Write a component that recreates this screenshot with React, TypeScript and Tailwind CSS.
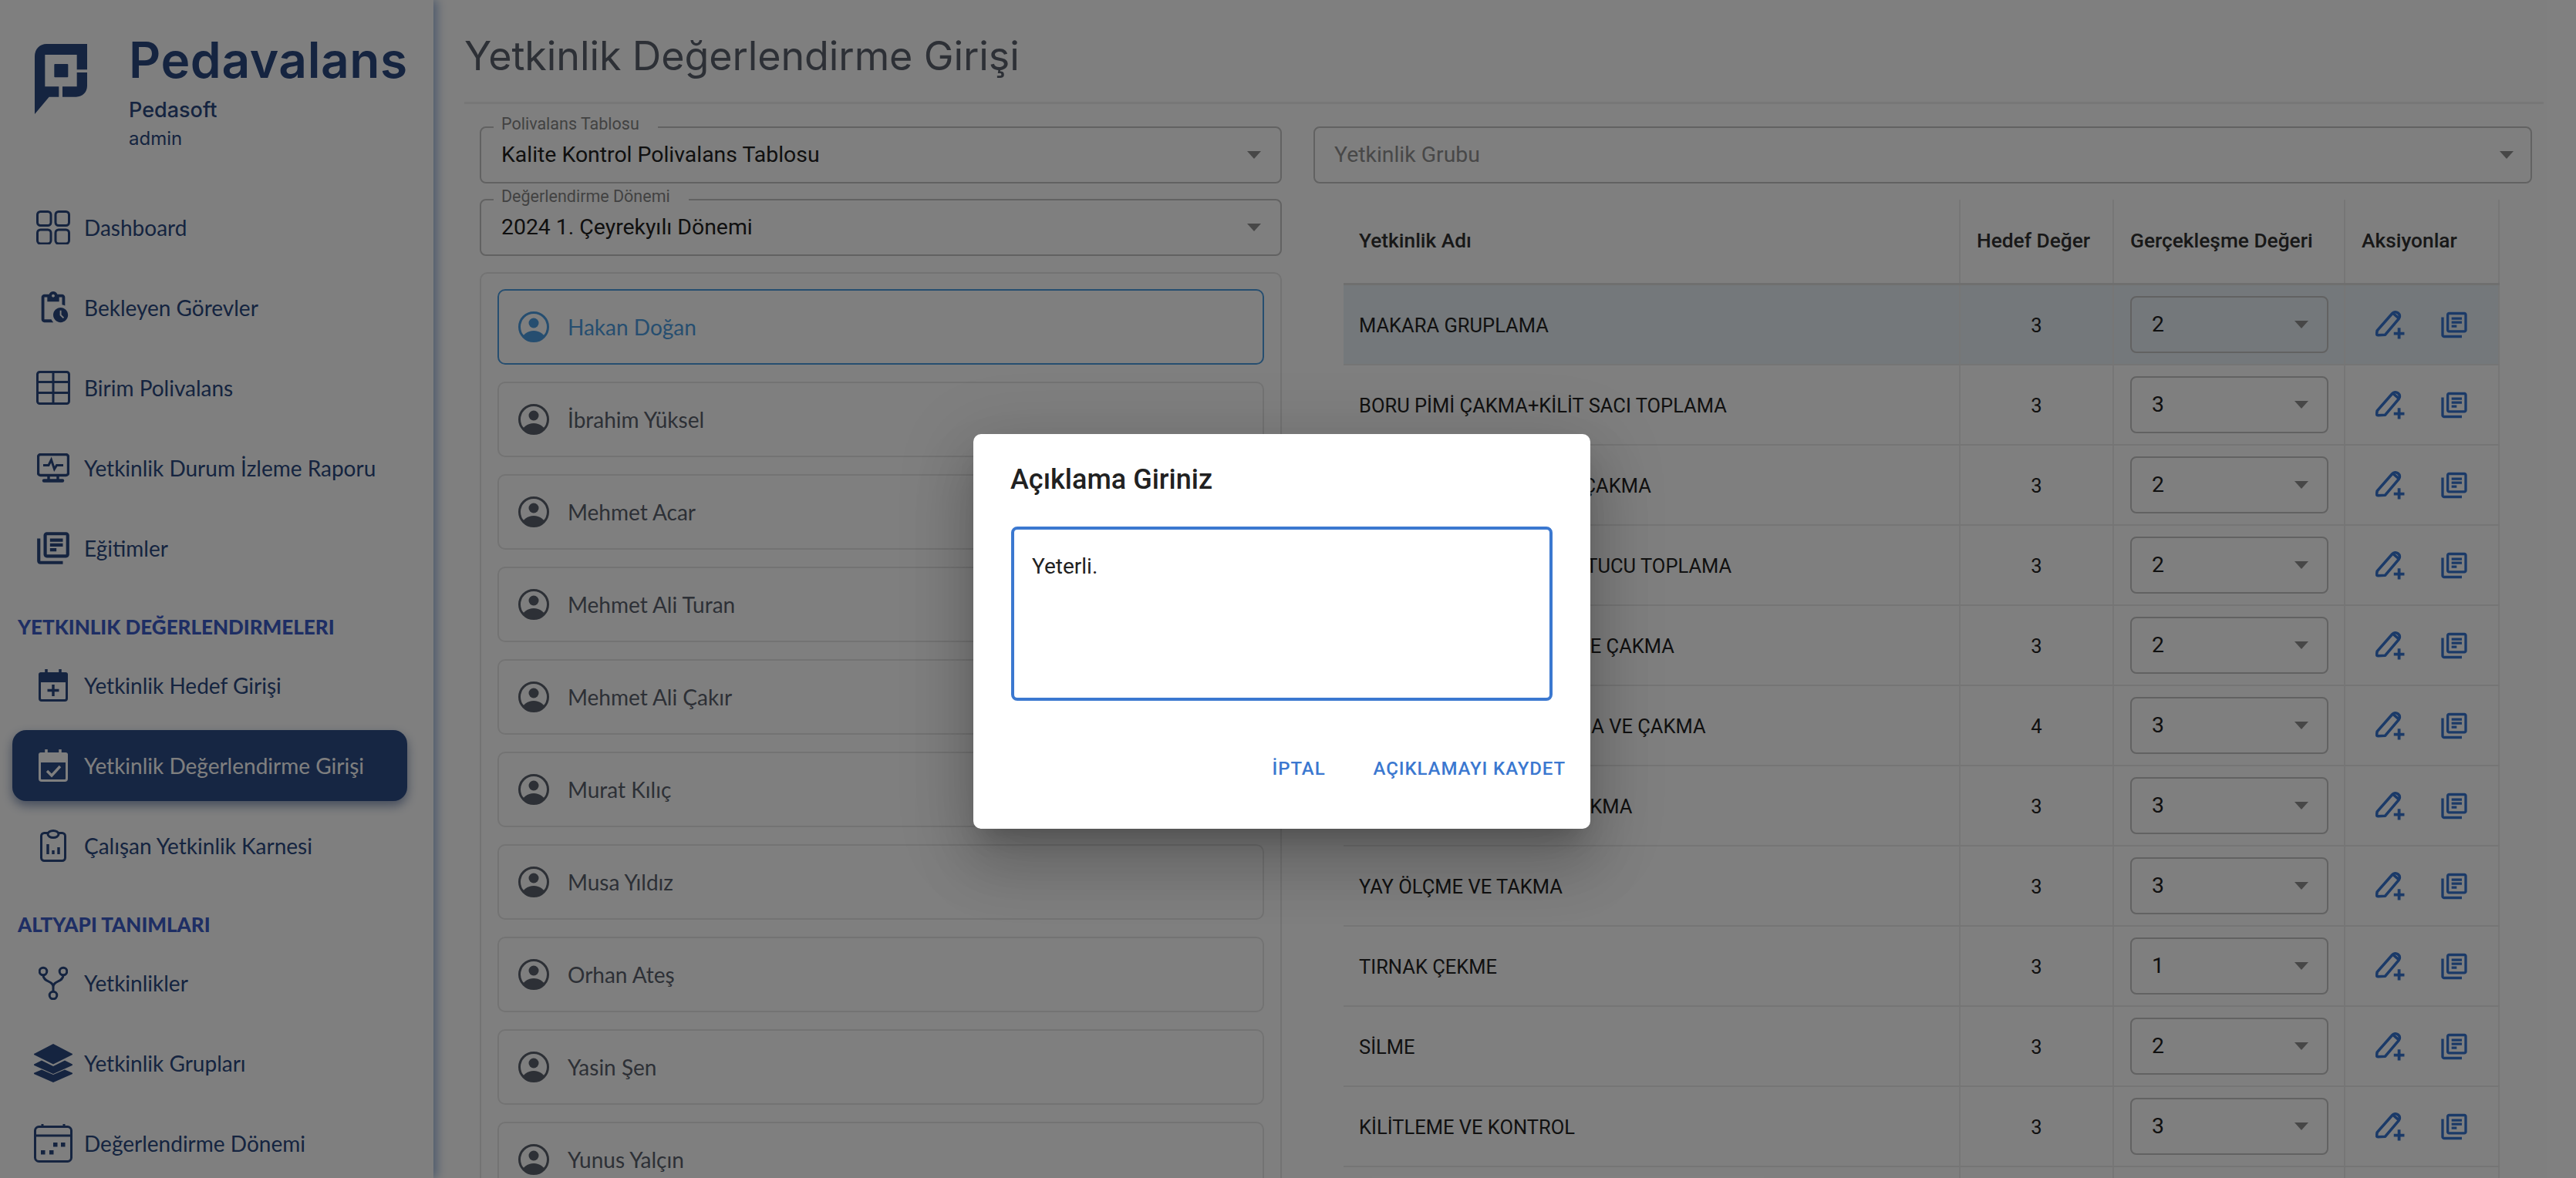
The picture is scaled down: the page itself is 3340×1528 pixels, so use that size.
import type { ReactNode } from "react";
import { MdOutlineLibraryBooks, MdOutlinePendingActions } from "react-icons/md";

const roboto = "font-['Roboto',sans-serif]";
const lato = "font-['Lato',sans-serif]";
const inter = "font-['Inter',sans-serif]";

const DashboardIcon = () => (
  <svg viewBox="0 0 44 44" className="w-[44px] h-[44px]" fill="none" stroke="currentColor" strokeWidth="3">
    <rect x="1.5" y="1.5" width="17.5" height="18" rx="4" />
    <rect x="25" y="1.5" width="17.5" height="18" rx="4" />
    <rect x="1.5" y="25" width="17.5" height="18" rx="4" />
    <rect x="25" y="25" width="17.5" height="18" rx="4" />
  </svg>
);

const TableIcon = () => (
  <svg viewBox="0 0 44 44" className="w-[44px] h-[44px]" fill="none" stroke="currentColor" strokeWidth="3">
    <rect x="1.5" y="1.5" width="41" height="41" rx="3" />
    <path d="M1.5 14.5h41M1.5 28.5h41M22 1.5v41" />
  </svg>
);

const MonitorIcon = () => (
  <svg viewBox="0 0 42 38" className="w-[42px] h-[38px]" fill="none" stroke="currentColor">
    <rect x="1.5" y="1.5" width="39" height="27" rx="3" strokeWidth="3.4" />
    <path d="M8 15.500h7l3.500-7 4 12 3-5h8.500" strokeWidth="3" />
    <path d="M15 29v6M27 29v6" strokeWidth="3.4" />
    <path d="M9 35.500h24" strokeWidth="4.400" strokeLinecap="round" />
  </svg>
);

const CalendarPlusIcon = () => (
  <svg viewBox="0 0 38 42" className="w-[38px] h-[42px]" fill="none">
    <path d="M3 4h32a3 3 0 0 1 3 3v10H0V7a3 3 0 0 1 3-3z" fill="currentColor" />
    <path d="M10 0v6M28 0v6" stroke="currentColor" strokeWidth="3.5" />
    <rect x="1.5" y="6" width="35" height="34.5" rx="2.5" stroke="currentColor" strokeWidth="3" />
    <path d="M19 20v15M11.5 27.5h15" stroke="currentColor" strokeWidth="3.4" />
  </svg>
);

const CalendarCheckIcon = () => (
  <svg viewBox="0 0 38 42" className="w-[38px] h-[42px]" fill="none">
    <path d="M3 4h32a3 3 0 0 1 3 3v10H0V7a3 3 0 0 1 3-3z" fill="currentColor" />
    <path d="M10 0v6M28 0v6" stroke="currentColor" strokeWidth="3.5" />
    <rect x="1.5" y="6" width="35" height="34.5" rx="2.5" stroke="currentColor" strokeWidth="3" />
    <path d="M11 28l6 6 11-12" stroke="currentColor" strokeWidth="3.4" />
  </svg>
);

const ReportIcon = () => (
  <svg viewBox="0 0 34 42" className="w-[34px] h-[42px]" fill="none" stroke="currentColor">
    <rect x="1.5" y="4.5" width="31" height="36" rx="4" strokeWidth="3" />
    <ellipse cx="17" cy="6" rx="7" ry="4.5" strokeWidth="3" fill="#fff" />
    <path d="M10 19v13M17 27v5M24 23v9" strokeWidth="3.4" />
  </svg>
);

const ForkIcon = () => (
  <svg viewBox="0 0 38 44" className="w-[38px] h-[44px]" fill="none" stroke="currentColor" strokeWidth="3">
    <circle cx="6" cy="7" r="4.8" />
    <circle cx="32" cy="7" r="4.8" />
    <circle cx="19" cy="38" r="4.8" />
    <path d="M6 12c0 9 13 7 13 15v6M32 12c0 9-13 7-13 15" />
  </svg>
);

const LayersIcon = () => (
  <svg viewBox="0 0 50 50" className="w-[50px] h-[50px]" fill="currentColor">
    <path d="M25 0l24 12.5a1 1 0 0 1 0 2L25 26.5 1 14.5a1 1 0 0 1 0-2z" />
    <path d="M10 21.5l15 7.5 15-7.5 9.5 4.8a1 1 0 0 1 0 1.8L25 39 .5 28.1a1 1 0 0 1 0-1.8z" />
    <path d="M10 33.5l15 6.5 15-6.5 9.5 4a1 1 0 0 1 0 1.8L25 50 .5 39.3a1 1 0 0 1 0-1.8z" />
  </svg>
);

const CalendarDotsIcon = () => (
  <svg viewBox="0 0 50 50" className="w-[50px] h-[50px]" fill="none">
    <rect x="1.5" y="3.5" width="47" height="45" rx="5" stroke="currentColor" strokeWidth="3" />
    <path d="M1.5 15h47M11 0v4M39 0v4" stroke="currentColor" strokeWidth="3" />
    <path d="M9 34h5.5v5.5H9zM20 34h5.5v5.5H20zM25 24h5.5v5.5H25zM35 24h5.5v5.5H35z" fill="currentColor" />
  </svg>
);

const Logo = () => (
  <svg viewBox="44 22 204 273" className="w-[68px] h-[91px] shrink-0 text-[#2a4880]" fill="currentColor">
    <path d="M44 295V70c0-28 20-48 46-48h158v100h-40V64H84v124h54v40h-38z" />
    <path d="M208 133h40v52c0 25-18 43-43 43h-53v-40h56z" />
    <rect x="120" y="100" width="54" height="52" rx="3" />
  </svg>
);

const PenPlusIcon = () => (
  <svg viewBox="0 0 36 36" className="w-[38px] h-[38px]" fill="none" stroke="currentColor" strokeWidth="3.4">
    <path d="M2 25.500L20.500 4.500c2-2.200 5-2.400 7.200-.7 2.200 1.700 2.700 4.700 1 6.900L12 30.500l-9 .5c-1 0-1.500-.5-1.500-1.500z" strokeLinejoin="round" />
    <path d="M22 4.500l7 6" />
    <path d="M29 22v13.500M22.500 29h13" strokeWidth="3.600" />
  </svg>
);

const AvatarIcon = ({ clipId }: { clipId: string }) => (
  <svg viewBox="0 0 40 40" className="w-[40px] h-[40px] shrink-0" fill="currentColor">
    <defs>
      <clipPath id={clipId}>
        <circle cx="20" cy="20" r="18" />
      </clipPath>
    </defs>
    <circle cx="20" cy="20" r="18.500" fill="none" stroke="currentColor" strokeWidth="3" />
    <circle cx="20" cy="15" r="6.500" />
    <ellipse cx="20" cy="37" rx="15" ry="12" clipPath={`url(#${clipId})`} />
  </svg>
);

const Arrow = () => (
  <svg viewBox="0 0 18 10" className="w-[18px] h-[10px] shrink-0" fill="#8f8f8f">
    <path d="M0 0h18L9 10z" />
  </svg>
);

type NavRow = { label: string; icon: ReactNode; active?: boolean };

const topNav: NavRow[] = [
  { label: "Dashboard", icon: <DashboardIcon /> },
  { label: "Bekleyen Görevler", icon: <MdOutlinePendingActions className="w-[46px] h-[46px]" /> },
  { label: "Birim Polivalans", icon: <TableIcon /> },
  { label: "Yetkinlik Durum İzleme Raporu", icon: <MonitorIcon /> },
  { label: "Eğitimler", icon: <MdOutlineLibraryBooks className="w-[50px] h-[50px]" /> },
];

const evalNav: NavRow[] = [
  { label: "Yetkinlik Hedef Girişi", icon: <CalendarPlusIcon /> },
  { label: "Yetkinlik Değerlendirme Girişi", icon: <CalendarCheckIcon />, active: true },
  { label: "Çalışan Yetkinlik Karnesi", icon: <ReportIcon /> },
];

const infraNav: NavRow[] = [
  { label: "Yetkinlikler", icon: <ForkIcon /> },
  { label: "Yetkinlik Grupları", icon: <LayersIcon /> },
  { label: "Değerlendirme Dönemi", icon: <CalendarDotsIcon /> },
];

const people = [
  "Hakan Doğan",
  "İbrahim Yüksel",
  "Mehmet Acar",
  "Mehmet Ali Turan",
  "Mehmet Ali Çakır",
  "Murat Kılıç",
  "Musa Yıldız",
  "Orhan Ateş",
  "Yasin Şen",
  "Yunus Yalçın",
];

const rows = [
  { name: "MAKARA GRUPLAMA", target: 3, value: 2 },
  { name: "BORU PİMİ ÇAKMA+KİLİT SACI TOPLAMA", target: 3, value: 3 },
  { name: "KİLİT SACI VE PİMLERİNİ ÇAKMA", target: 3, value: 2 },
  { name: "MAKARA VE KİLİT YAY TUTUCU TOPLAMA", target: 3, value: 2 },
  { name: "MAKARA MİLİNİ TAKMA VE ÇAKMA", target: 3, value: 2 },
  { name: "GÖVDE PİMLERİ HİZALAMA VE ÇAKMA", target: 4, value: 3 },
  { name: "KİLİT MİLİ VE KOL YAYI TAKMA", target: 3, value: 3 },
  { name: "YAY ÖLÇME VE TAKMA", target: 3, value: 3 },
  { name: "TIRNAK ÇEKME", target: 3, value: 1 },
  { name: "SİLME", target: 3, value: 2 },
  { name: "KİLİTLEME VE KONTROL", target: 3, value: 3 },
];

function NavItem({ row }: { row: NavRow }) {
  return (
    <div className="h-[104px] flex items-center">
      <div
        className={
          row.active
            ? "mx-[16px] w-[512px] h-[92px] rounded-[18px] bg-[#2c4c86] text-white flex items-center pl-[28px] shadow-[0_6px_14px_rgba(40,70,125,0.55)]"
            : "flex items-center pl-[44px] text-[#2a4880]"
        }
      >
        <span className="w-[50px] flex justify-center shrink-0">{row.icon}</span>
        <span className={`${lato} ml-[15px] text-[28px] whitespace-nowrap`}>{row.label}</span>
      </div>
    </div>
  );
}

function SectionTitle({ children }: { children: ReactNode }) {
  return (
    <div className={`${lato} h-[48px] mt-[26px] pl-[23px] flex items-center text-[26px] font-black text-[#3c5cc8] whitespace-nowrap`}>
      {children}
    </div>
  );
}

function Sidebar() {
  return (
    <aside className="relative z-10 w-[562px] h-full shrink-0 bg-white shadow-[5px_0_12px_rgba(80,125,190,0.55)]">
      <div className="h-[243px] pl-[45px] pt-[57px] flex items-start">
        <Logo />
        <div className="ml-[54px] -mt-[1px] text-[#2a4880]">
          <div className={`${inter} text-[64px] leading-[44px] h-[44px] font-semibold tracking-[0.6px] whitespace-nowrap`}>Pedavalans</div>
          <div className={`${inter} mt-[28px] text-[27px] leading-[30px] font-medium`}>Pedasoft</div>
          <div className={`${inter} mt-[8px] text-[24px] leading-[28px]`}>admin</div>
        </div>
      </div>
      {topNav.map((r) => (
        <NavItem key={r.label} row={r} />
      ))}
      <SectionTitle>YETKINLIK DEĞERLENDIRMELERI</SectionTitle>
      {evalNav.map((r) => (
        <NavItem key={r.label} row={r} />
      ))}
      <SectionTitle>ALTYAPI TANIMLARI</SectionTitle>
      {infraNav.map((r) => (
        <NavItem key={r.label} row={r} />
      ))}
    </aside>
  );
}

function SelectBox({ label, value, placeholder, inset }: { label?: string; value?: string; placeholder?: string; inset: string }) {
  return (
    <div className={`relative h-[74px] rounded-[8px] border-2 border-[#c4c4c4] flex items-center justify-between ${inset}`}>
      {label && (
        <span className={`${roboto} absolute left-[16px] -top-[17px] bg-white pl-[10px] pr-[24px] text-[21.5px] leading-[24px] text-[#858585] whitespace-nowrap`}>
          {label}
        </span>
      )}
      {value && <span className={`${roboto} text-[28.4px] text-[#212121]`}>{value}</span>}
      {placeholder && <span className={`${roboto} text-[28.4px] text-[#909090]`}>{placeholder}</span>}
      <Arrow />
    </div>
  );
}

function PersonCard({ name, selected, index }: { name: string; selected: boolean; index: number }) {
  return (
    <div
      className={`h-[98px] shrink-0 rounded-[10px] border-2 flex items-center pl-[25px] ${
        selected ? "border-[#4c9ce0] text-[#4c9ce0]" : "border-[#e6e6e6] text-[#5a616c]"
      }`}
    >
      <AvatarIcon clipId={`avatar-${index}`} />
      <span className={`${lato} ml-[24px] text-[28px] whitespace-nowrap`}>{name}</span>
    </div>
  );
}

function TableRow({ name, target, value, selected }: { name: string; target: number; value: number; selected: boolean }) {
  return (
    <div className={`h-[104px] grid grid-cols-[800px_199px_300px_200px] border-b-2 border-[#ebebeb] ${selected ? "bg-[#e8f1f7]" : ""}`}>
      <div className={`${roboto} pl-[20px] pt-[2px] flex items-center border-r-2 border-[#ededed] text-[25.5px] text-[#222222] whitespace-nowrap`}>{name}</div>
      <div className={`${roboto} pt-[2px] flex items-center justify-center border-r-2 border-[#ededed] text-[25.5px] text-[#222222]`}>{target}</div>
      <div className="pl-[21px] flex items-center border-r-2 border-[#ededed]">
        <div className="w-[257px] h-[74px] rounded-[8px] border-2 border-[#c4c4c4] flex items-center justify-between pl-[26px] pr-[24px]">
          <span className={`${roboto} text-[28.4px] text-[#212121]`}>{value}</span>
          <Arrow />
        </div>
      </div>
      <div className="pl-[38px] flex items-center gap-[43px] border-r-2 border-[#ededed] text-[#3674d0]">
        <span className="w-[40px] flex justify-center"><PenPlusIcon /></span>
        <span className="w-[40px] flex justify-center"><MdOutlineLibraryBooks className="w-[43px] h-[43px]" /></span>
      </div>
    </div>
  );
}

function DataTable() {
  return (
    <div className="mt-[21px] ml-[39px] w-[1499px]">
      <div className={`${roboto} h-[111px] grid grid-cols-[800px_199px_300px_200px] border-b-[3px] border-[#dedede] text-[26.3px] font-medium text-[#303030]`}>
        <div className="pl-[20px] flex items-center border-r-2 border-[#ededed]">Yetkinlik Adı</div>
        <div className="pl-[21px] flex items-center border-r-2 border-[#ededed] whitespace-nowrap">Hedef Değer</div>
        <div className="pl-[21px] flex items-center border-r-2 border-[#ededed] whitespace-nowrap">Gerçekleşme Değeri</div>
        <div className="pl-[21px] flex items-center border-r-2 border-[#ededed]">Aksiyonlar</div>
      </div>
      {rows.map((r, i) => (
        <TableRow key={r.name} name={r.name} target={r.target} value={r.value} selected={i === 0} />
      ))}
      <div className="h-[40px] grid grid-cols-[800px_199px_300px_200px]">
        <div className="border-r-2 border-[#ededed]" />
        <div className="border-r-2 border-[#ededed]" />
        <div className="border-r-2 border-[#ededed]" />
        <div className="border-r-2 border-[#ededed]" />
      </div>
    </div>
  );
}

function CommentDialog() {
  return (
    <div className={`${roboto} absolute left-[1262px] top-[563px] w-[800px] h-[512px] rounded-[10px] bg-white flex flex-col shadow-[0_22px_30px_-14px_rgba(0,0,0,0.2),0_48px_76px_6px_rgba(0,0,0,0.14),0_18px_92px_16px_rgba(0,0,0,0.12)]`}>
      <h2 className="pl-[48px] pt-[36px] text-[36px] leading-[46px] font-medium text-[#212121]">Açıklama Giriniz</h2>
      <textarea
        readOnly
        defaultValue="Yeterli."
        className="mt-[38px] ml-[49px] w-[702px] h-[226px] resize-none rounded-[8px] border-4 border-[#3b78d0] px-[23px] py-[28px] text-[28px] leading-[40px] text-[#212121] outline-none"
      />
      <div className="mt-[72px] pr-[32px] flex justify-end gap-[62px] text-[24px] leading-[32px] font-medium tracking-[0.9px] text-[#3b78d0]">
        <span>İPTAL</span>
        <span>AÇIKLAMAYI KAYDET</span>
      </div>
    </div>
  );
}

export default function App() {
  return (
    <div className="relative w-[3340px] h-[1528px] overflow-hidden bg-white flex">
      <Sidebar />
      <main className="flex-1 min-w-0">
        <div className="ml-[40px] mr-[42px] h-[135px] border-b-[3px] border-[#eeeeee] flex items-center pt-[14px]">
          <h1 className={`${inter} text-[52px] tracking-[-0.1px] text-[#5a616c] whitespace-nowrap`}>Yetkinlik Değerlendirme Girişi</h1>
        </div>
        <div className="pl-[60px] mt-[29px] flex gap-[41px]">
          <div className="w-[1040px] shrink-0">
            <SelectBox inset="pl-[26px] pr-[25px]" label="Polivalans Tablosu" value="Kalite Kontrol Polivalans Tablosu" />
            <div className="h-[20px]" />
            <SelectBox inset="pl-[26px] pr-[25px]" label="Değerlendirme Dönemi" value="2024 1. Çeyrekyılı Dönemi" />
            <div className="mt-[21px] rounded-[10px] border-2 border-[#e6e6e6] px-[21px] pt-[20px] pb-[20px] flex flex-col gap-[22px]">
              {people.map((p, i) => (
                <PersonCard key={p} name={p} selected={i === 0} index={i} />
              ))}
            </div>
          </div>
          <div className="w-[1580px] shrink-0">
            <SelectBox inset="pl-[25px] pr-[22px]" placeholder="Yetkinlik Grubu" />
            <DataTable />
          </div>
        </div>
      </main>
      <div className="absolute inset-0 z-20 bg-black/50">
        <CommentDialog />
      </div>
    </div>
  );
}
